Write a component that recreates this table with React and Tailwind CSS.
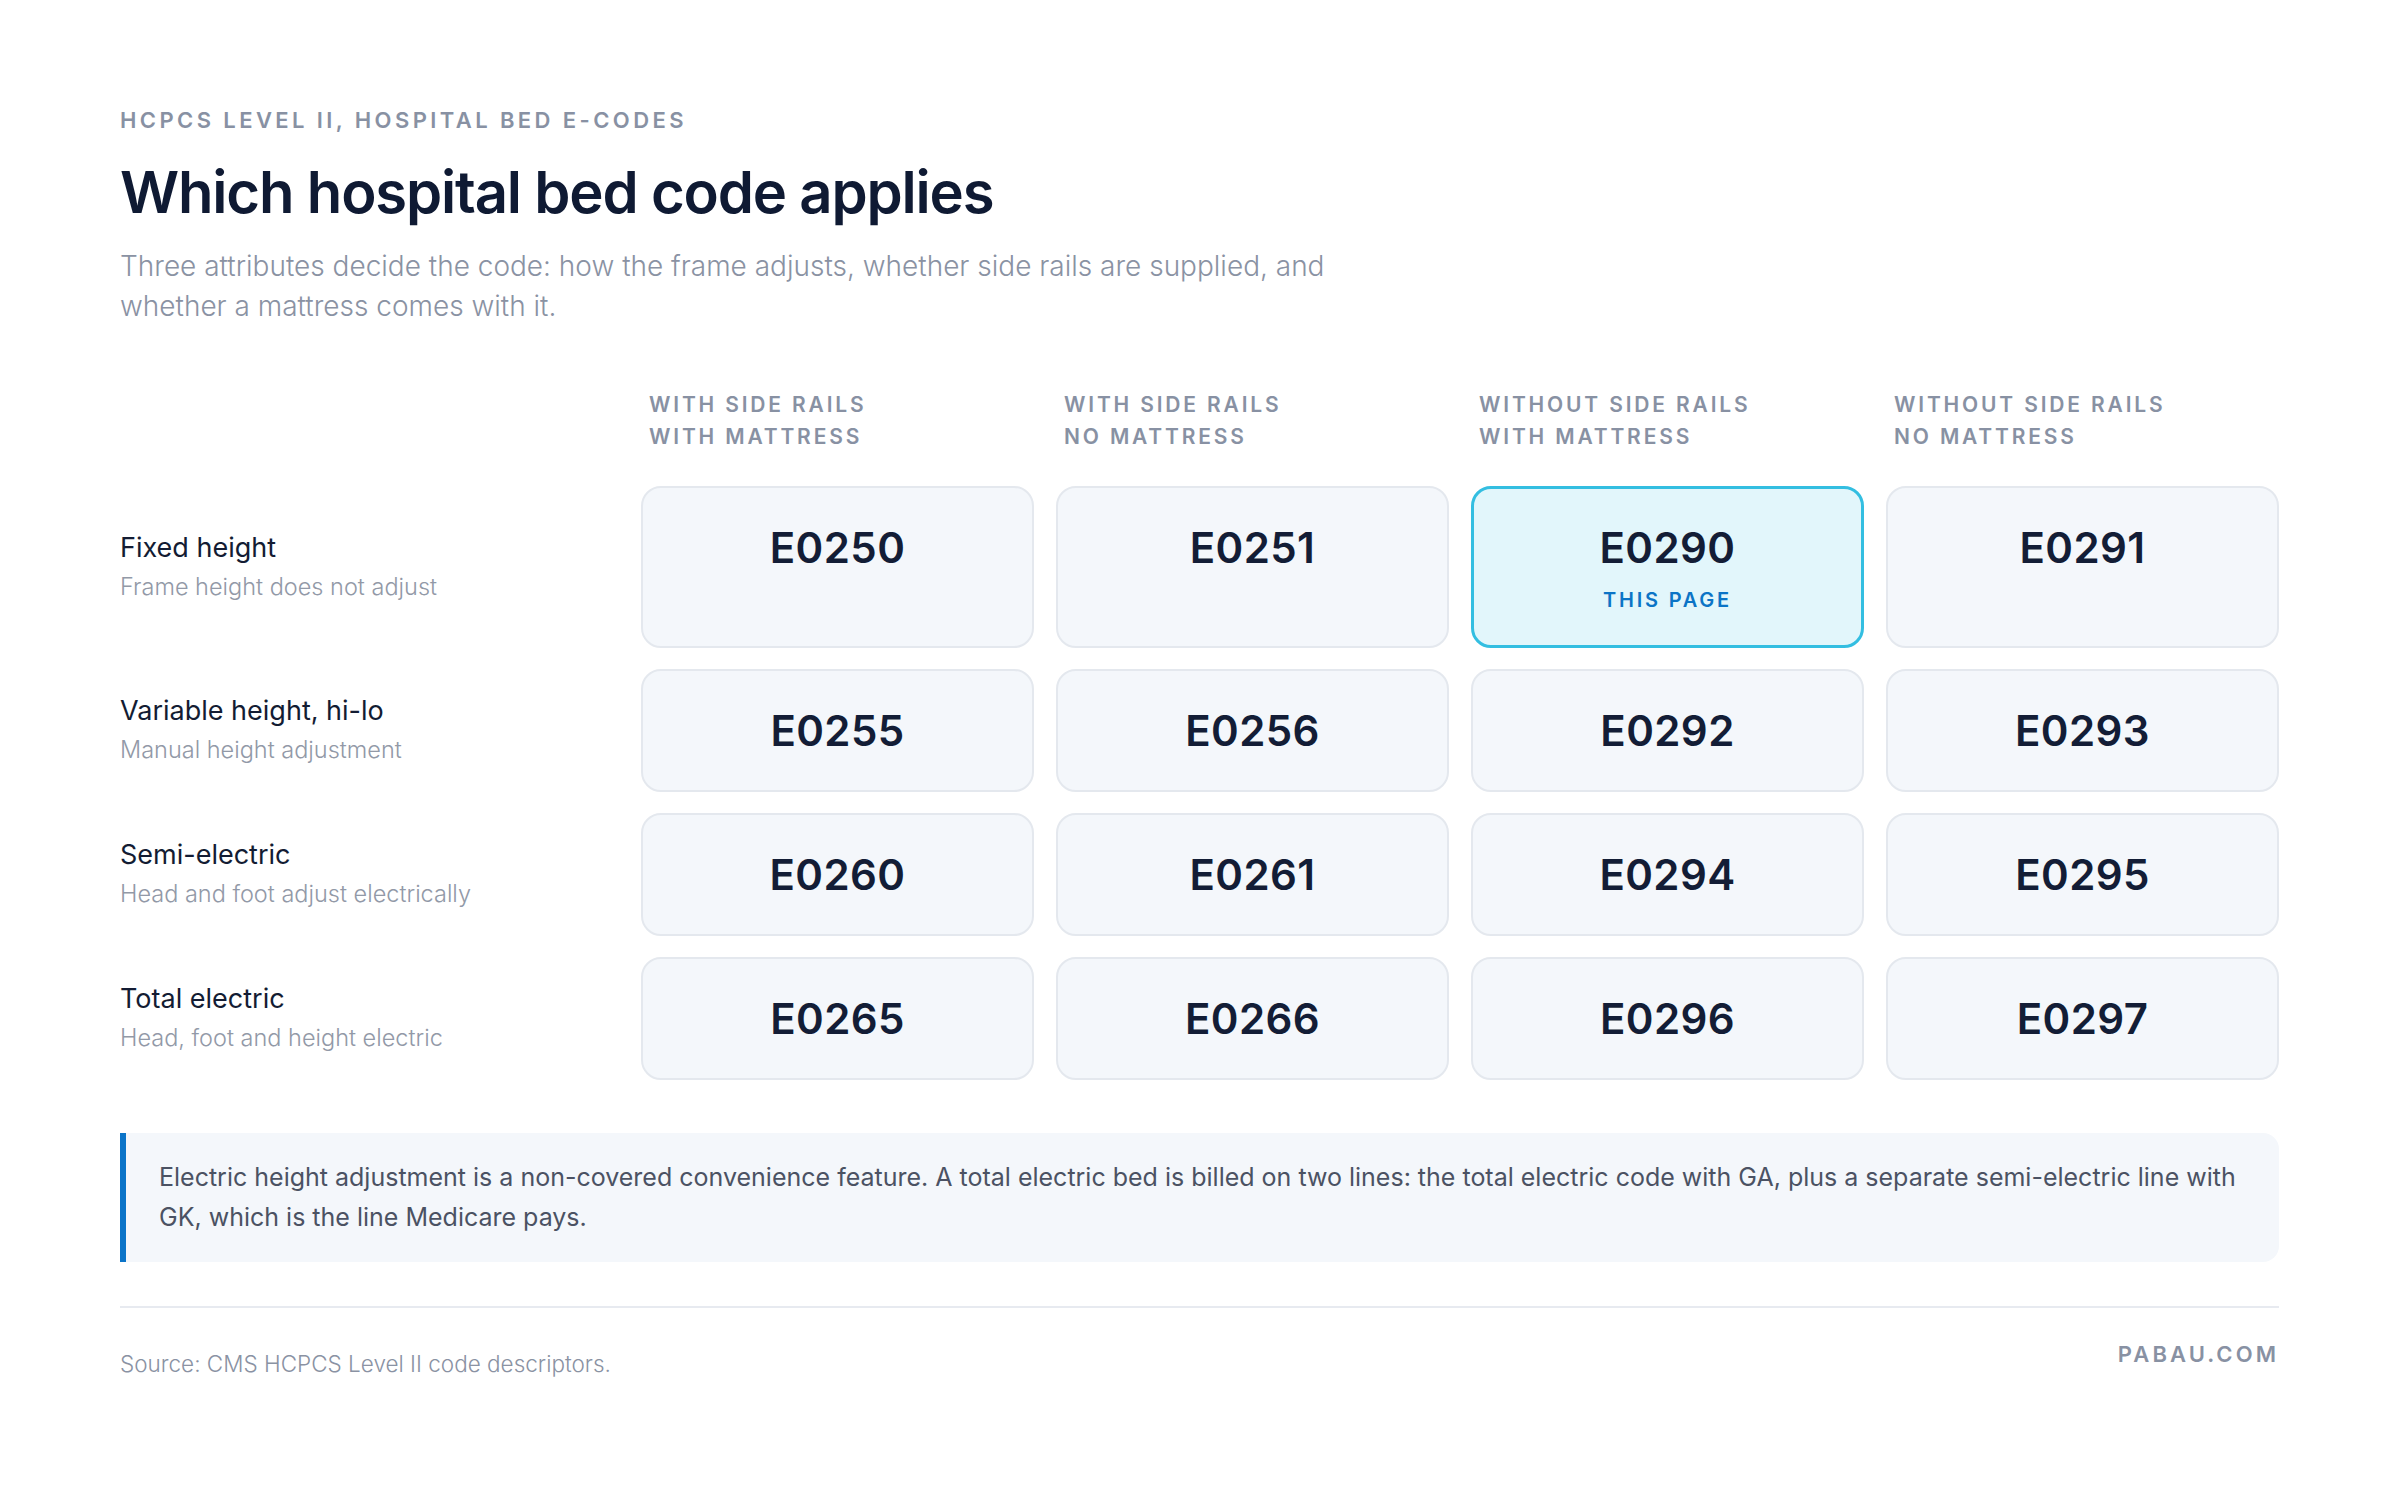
import React from "react";

const columns = [
  ["With side rails", "With mattress"],
  ["With side rails", "No mattress"],
  ["Without side rails", "With mattress"],
  ["Without side rails", "No mattress"],
];

const rows = [
  { title: "Fixed height", sub: "Frame height does not adjust", codes: ["E0250", "E0251", "E0290", "E0291"], tall: true },
  { title: "Variable height, hi-lo", sub: "Manual height adjustment", codes: ["E0255", "E0256", "E0292", "E0293"] },
  { title: "Semi-electric", sub: "Head and foot adjust electrically", codes: ["E0260", "E0261", "E0294", "E0295"] },
  { title: "Total electric", sub: "Head, foot and height electric", codes: ["E0265", "E0266", "E0296", "E0297"] },
];

const CURRENT = "E0290";

const CodeCard = ({ code, tall }) => {
  const active = code === CURRENT;
  return (
    <div
      className={`flex flex-col items-center justify-center rounded-[20px] ${tall ? "h-[162px] pt-[5px]" : "h-[123px]"} ${
        active ? "border-[3px] border-[#33bee1] bg-[#e2f6fb]" : "border-2 border-[#e4e8ee] bg-[#f4f7fb]"
      }`}
    >
      <span className="text-[42px] leading-[42px] font-semibold tracking-[0.01em] text-[#131d36]">{code}</span>
      {tall && (
        <span
          className={`mt-[19px] text-[20px] leading-[24px] font-semibold tracking-[0.14em] uppercase ${
            active ? "text-[#0b74c6]" : "invisible"
          }`}
        >
          This page
        </span>
      )}
    </div>
  );
};

export default function App() {
  return (
    <div className="w-[2400px] min-h-[1502px] bg-white pl-[120px] pr-[121px] pt-[106px] font-['Inter',sans-serif]">
      {/* Heading */}
      <div className="text-[22px] leading-[28px] font-semibold tracking-[0.155em] uppercase text-[#8891a3]">
        HCPCS Level II, hospital bed E-codes
      </div>
      <h1 className="mt-[29px] text-[58px] leading-[58px] font-semibold tracking-[-0.02em] text-[#0f1a33]">
        Which hospital bed code applies
      </h1>
      <p className="mt-[25px] max-w-[1280px] text-[28px] leading-[40px] font-light text-[#8a92a3]">
        Three attributes decide the code: how the frame adjusts, whether side rails are supplied, and whether a
        mattress comes with it.
      </p>

      {/* Matrix */}
      <div className="mt-[63px] grid grid-cols-[499px_repeat(4,393px)] gap-x-[22px]">
        <div />
        {columns.map(([a, b], i) => (
          <div key={i} className="pl-[8px] text-[21px] leading-[32px] font-semibold tracking-[0.135em] uppercase text-[#8891a3]">
            <div>{a}</div>
            <div>{b}</div>
          </div>
        ))}
      </div>

      <div className="mt-[33px] grid grid-cols-[499px_repeat(4,393px)] gap-x-[22px] gap-y-[21px]">
        {rows.map((row) => (
          <React.Fragment key={row.title}>
            <div className="flex flex-col justify-center">
              <div className="text-[27px] leading-[32px] text-[#131c33]">{row.title}</div>
              <div className="mt-[7px] text-[23.5px] leading-[32px] font-light text-[#9299a7]">{row.sub}</div>
            </div>
            {row.codes.map((c) => (
              <CodeCard key={c} code={c} tall={row.tall} />
            ))}
          </React.Fragment>
        ))}
      </div>

      {/* Note */}
      <div className="mt-[53px] rounded-r-[16px] border-l-[6px] border-[#0b74c8] bg-[#f4f7fb] pl-[33px] pr-[40px] pt-[24px] pb-[25px]">
        <p className="text-[25px] leading-[40px] text-[#4b5263]">
          Electric height adjustment is a non-covered convenience feature. A total electric bed is billed on two
          lines: the total electric code with GA, plus a separate semi-electric line with GK, which is the line
          Medicare pays.
        </p>
      </div>

      {/* Footer */}
      <div className="mt-[44px] h-[2px] bg-[#e7eaf0]" />
      <div className="mt-[32px] flex items-start justify-between">
        <span className="pt-[10px] text-[22.5px] leading-[28px] font-light text-[#8a92a3]">
          Source: CMS HCPCS Level II code descriptors.
        </span>
        <span className="text-[22px] leading-[28px] font-semibold tracking-[0.14em] text-[#8891a3]">PABAU.COM</span>
      </div>
    </div>
  );
}
